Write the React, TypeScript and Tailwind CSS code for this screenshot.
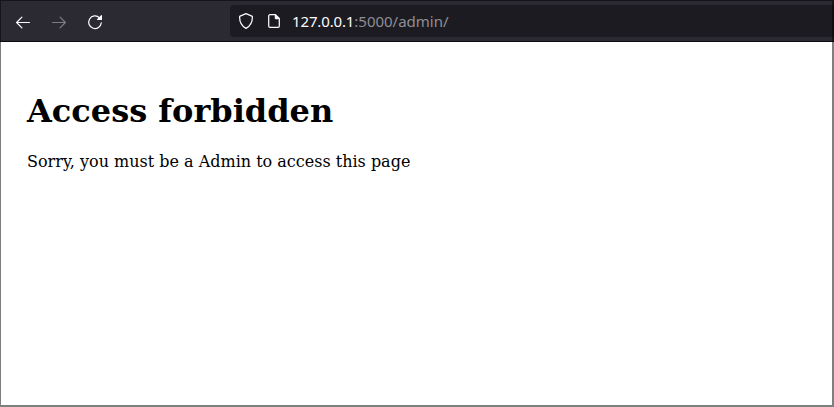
import React from "react";

function BackIcon() {
  return (
    <svg width="16" height="16" viewBox="0 0 16 16" fill="none" stroke="#fbfbfe" strokeWidth="1.2" strokeLinecap="round" strokeLinejoin="round">
      <path d="M14.4 8.5H1.7M6.9 3.2 1.6 8.5l5.3 5.3" />
    </svg>
  );
}

function ForwardIcon() {
  return (
    <svg width="16" height="16" viewBox="0 0 16 16" fill="none" stroke="#7e7d83" strokeWidth="1.2" strokeLinecap="round" strokeLinejoin="round">
      <path d="M1.6 8.5h12.7M9.1 3.2l5.3 5.3-5.3 5.3" />
    </svg>
  );
}

function ReloadIcon() {
  return (
    <svg width="16" height="16" viewBox="0 0 16 16" fill="none">
      <path d="M12.4 3.7A6.3 6.3 0 1 0 14.3 8.8" stroke="#fbfbfe" strokeWidth="1.25" strokeLinecap="round" />
      <path d="M15 1.6v4a.5.5 0 0 1-.5.5h-4c-.5 0-.7-.5-.4-.8L14.1 1.3c.4-.4.9-.2.9.3Z" fill="#fbfbfe" />
    </svg>
  );
}

function ShieldIcon() {
  return (
    <svg width="16" height="18" viewBox="0 0 16 18" fill="none" stroke="#fbfbfe" strokeWidth="1.25" strokeLinejoin="round">
      <path d="M8 1.7 2.1 4.1c-.4.2-.5.4-.5.8 0 5.2 1.8 8.9 6.4 11.5 4.6-2.6 6.4-6.3 6.4-11.5 0-.4-.1-.6-.5-.8L8 1.7Z" />
    </svg>
  );
}

function PageIcon() {
  return (
    <svg width="14" height="16" viewBox="0 0 14 16" fill="none">
      <path d="M8.5 1.7H3A1.3 1.3 0 0 0 1.7 3v10A1.3 1.3 0 0 0 3 14.3h8a1.3 1.3 0 0 0 1.3-1.3V5.5L8.5 1.7Z" stroke="#fbfbfe" strokeWidth="1.25" strokeLinejoin="round" />
      <path d="M8 1.5v3.8c0 .4.3.7.7.7h3.8L8 1.5Z" fill="#fbfbfe" stroke="#fbfbfe" strokeWidth=".5" />
    </svg>
  );
}

export default function App() {
  return (
    <div className="relative flex h-[407px] w-[834px] flex-col overflow-hidden bg-white">
      <header className="flex h-[42px] shrink-0 items-start border-b border-[#0c0c0d] bg-[#2b2a33]">
        <nav className="flex gap-5 pt-[13px] pl-[15px]">
          <button aria-label="Back"><BackIcon /></button>
          <button aria-label="Forward"><ForwardIcon /></button>
          <button aria-label="Reload" className="pt-px"><ReloadIcon /></button>
        </nav>
        <div className="mt-[5px] ml-[127px] flex h-8 grow items-center rounded-l bg-[#1c1b22] pl-2">
          <ShieldIcon />
          <span className="ml-[13px]"><PageIcon /></span>
          <span className="ml-[11px] font-['Noto_Sans',sans-serif] text-[15px] leading-5 whitespace-nowrap text-[#8f8e94]">
            <span className="tracking-[-0.14px] text-[#fbfbfe]">127.0.0.1</span>:5000/admin/
          </span>
        </div>
      </header>
      <main className="grow pt-[50px] pl-[27px] font-['DejaVu_Serif',serif] text-black">
        <h1 className="text-[32px] leading-[38px] font-bold">Access forbidden</h1>
        <p className="mt-[22px] text-base leading-[19px]">Sorry, you must be a Admin to access this page</p>
      </main>
      <div className="pointer-events-none absolute inset-0 border-t border-r-2 border-b-2 border-l border-black/50" />
    </div>
  );
}
